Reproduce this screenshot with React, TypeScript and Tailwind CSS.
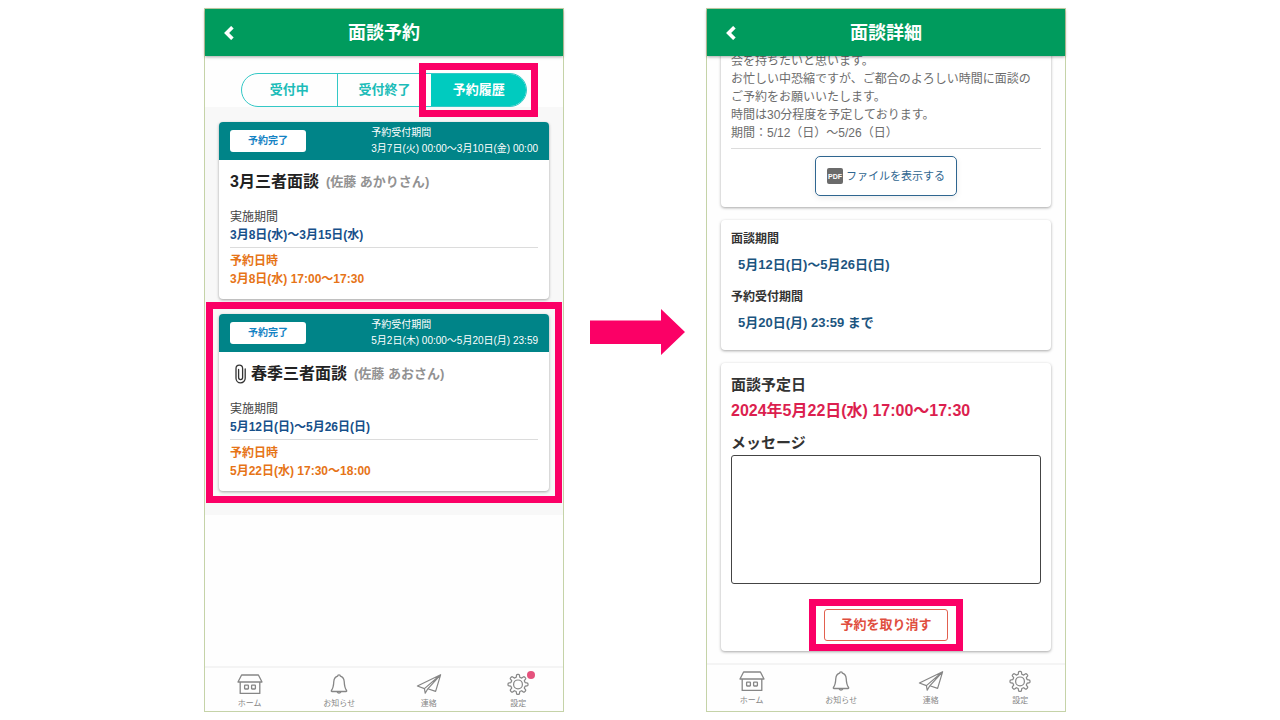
import { useState } from 'react';
import type { ReactNode } from 'react';
import clsx from 'clsx';

interface Reservation {
  id: number;
  acceptPeriod: string;
  title: string;
  student: string;
  period: string;
  reservedAt: string;
  hasFile?: boolean;
  highlighted?: boolean;
}

const reservations: Reservation[] = [
  {
    id: 1,
    acceptPeriod: '3月7日(火) 00:00～3月10日(金) 00:00',
    title: '3月三者面談',
    student: '佐藤 あかりさん',
    period: '3月8日(水)～3月15日(水)',
    reservedAt: '3月8日(水) 17:00～17:30',
  },
  {
    id: 2,
    acceptPeriod: '5月2日(木) 00:00～5月20日(月) 23:59',
    title: '春季三者面談',
    student: '佐藤 あおさん',
    period: '5月12日(日)～5月26日(日)',
    reservedAt: '5月22日(水) 17:30～18:00',
    hasFile: true,
    highlighted: true,
  },
];

const tabs = ['受付中', '受付終了', '予約履歴'];

export default function App() {
  return (
    <div className="flex min-h-screen items-stretch bg-white pt-2 pr-[214px] pb-2 pl-[204px] font-['Liberation_Sans','Noto_Sans_CJK_JP',sans-serif] text-[#333]">
      <ReservationList />
      <FlowArrow />
      <ReservationDetail />
    </div>
  );
}

function Phone({ title, className, children }: { title: string; className?: string; children: ReactNode }) {
  return (
    <section
      className={clsx('flex min-w-0 flex-1 flex-col border border-[#c5d3a8] bg-[#fefefe]', className)}
    >
      <header className="relative z-10 grid h-[47px] shrink-0 grid-cols-[48px_1fr_48px] items-center bg-[#009b5d] text-white shadow-[0_1px_3px_rgba(0,0,0,0.35)]">
        <button type="button" aria-label="戻る" className="flex h-full items-center justify-center">
          <svg width="12" height="14" viewBox="0 0 12 14" fill="none" stroke="currentColor" strokeWidth="3.6">
            <path d="M9.4 1.2 3.6 7l5.8 5.8" />
          </svg>
        </button>
        <h1 className="text-center text-lg leading-6 font-bold">{title}</h1>
      </header>
      {children}
    </section>
  );
}

function Highlight({ className }: { className: string }) {
  return <span className={clsx('pointer-events-none absolute z-20 border-[7px] border-[#fb0066]', className)} />;
}

function ReservationList() {
  const [active, setActive] = useState(2);

  return (
    <Phone title="面談予約">
      <main className="flex-1">
        <div className="px-9 pt-[17px]">
          <div className="grid h-[34px] grid-cols-3 rounded-full border border-[#34c8c6]">
            {tabs.map((tab, i) => (
              <button
                key={tab}
                type="button"
                onClick={() => setActive(i)}
                className={clsx(
                  'relative text-[13px] leading-5 font-bold',
                  i === 1 && 'border-l border-[#34c8c6]',
                  i === 2 && 'rounded-r-full',
                  i === active ? 'bg-[#00cbbf] text-white' : 'text-[#1cbcb8]',
                )}
              >
                {tab}
                {i === 2 && <Highlight className="-inset-x-3 -inset-y-[11px]" />}
              </button>
            ))}
          </div>
        </div>
        <div className="space-y-[15px] bg-[#f8f8f8] px-3.5 pt-[15px] pb-6">
          {reservations.map((item) => (
            <ReservationCard key={item.id} item={item} />
          ))}
        </div>
      </main>
      <BottomNav unread />
    </Phone>
  );
}

function ReservationCard({ item }: { item: Reservation }) {
  return (
    <article className="relative rounded bg-white shadow-[0_1px_3px_rgba(0,0,0,0.35)]">
      <div className="flex h-[38px] items-center justify-between rounded-t bg-[#008488] px-[11px] text-white">
        <span className="w-[76px] rounded-[3px] bg-white text-center text-[10px] leading-[22px] font-bold text-[#1583c4]">
          予約完了
        </span>
        <div className="text-[10px] leading-4">
          <p>予約受付期間</p>
          <p>{item.acceptPeriod}</p>
        </div>
      </div>
      <div className="px-[11px] pt-2.5 pb-[11px]">
        <div className="flex h-6 items-center">
          {item.hasFile && <ClipIcon />}
          <h2 className="text-base leading-6 font-bold text-[#222]">{item.title}</h2>
          <span className="ml-[7px] text-[13px] leading-6 font-bold text-[#929292]">({item.student})</span>
        </div>
        <dl className="mt-3.5 text-xs leading-[18px]">
          <dt className="text-[#444]">実施期間</dt>
          <dd className="font-bold text-[#17508a]">{item.period}</dd>
          <dt className="mt-[3px] border-t border-[#dcdcdc] pt-1 font-bold text-[#e67417]">予約日時</dt>
          <dd className="font-bold text-[#e67417]">{item.reservedAt}</dd>
        </dl>
      </div>
      {item.highlighted && <Highlight className="-inset-x-[13px] -inset-y-3" />}
    </article>
  );
}

function FlowArrow() {
  return (
    <div className="w-[142px] shrink-0 pt-[301px] pl-[26px]">
      <svg width="95" height="46" viewBox="0 0 95 46" fill="#fb0066" aria-hidden="true">
        <path d="M0 11.5h71V0l24 23-24 23V35H0z" />
      </svg>
    </div>
  );
}

function DetailCard({ className, children }: { className?: string; children: ReactNode }) {
  return (
    <article className={clsx('rounded bg-white px-2.5 shadow-[0_1px_3px_rgba(0,0,0,0.35)]', className)}>
      {children}
    </article>
  );
}

function ReservationDetail() {
  const [message, setMessage] = useState('');

  return (
    <Phone title="面談詳細" className="pb-[3px]">
      <main className="flex-1 space-y-[13px] px-3.5 pb-[11px]">
        <DetailCard className="-mt-1 pb-[11px]">
          <div className="border-b border-[#dcdcdc] pb-1.5 text-xs leading-[18px] text-[#6c6c6c]">
            <p>会を持ちたいと思います。</p>
            <p>お忙しい中恐縮ですが、ご都合のよろしい時間に面談のご予約をお願いいたします。</p>
            <p>時間は30分程度を予定しております。</p>
            <p>期間：5/12（日）～5/26（日）</p>
          </div>
          <button
            type="button"
            className="mx-auto mt-[7px] flex h-10 items-center gap-[3px] rounded-[5px] border border-[#2f6690] px-[11px] text-[11px] leading-4 text-[#2f6690] shadow-[0_2px_6px_rgba(0,0,0,0.08)]"
          >
            <span className="flex size-4 items-center justify-center rounded-[2px] bg-[#6b6b6b] text-[7px] leading-none font-bold text-white">
              PDF
            </span>
            ファイルを表示する
          </button>
        </DetailCard>

        <DetailCard className="pt-2.5 pb-[18px]">
          <dl className="font-bold">
            <dt className="text-xs leading-[18px]">面談期間</dt>
            <dd className="mt-2 pl-[7px] text-[13px] leading-[18px] text-[#1c557f]">5月12日(日)～5月26日(日)</dd>
            <dt className="mt-3.5 text-xs leading-[18px]">予約受付期間</dt>
            <dd className="mt-2 pl-[7px] text-[13px] leading-[18px] text-[#1c557f]">5月20日(月) 23:59 まで</dd>
          </dl>
        </DetailCard>

        <DetailCard className="pt-2.5 pb-2.5">
          <h2 className="text-[15px] leading-6 font-bold">面談予定日</h2>
          <p className="mt-0.5 text-base leading-6 font-bold text-[#dc1f4f]">2024年5月22日(水) 17:00～17:30</p>
          <label htmlFor="message" className="mt-2 block text-[15px] leading-6 font-bold">
            メッセージ
          </label>
          <textarea
            id="message"
            value={message}
            onChange={(e) => setMessage(e.target.value)}
            className="block h-[129px] w-full resize-none rounded-[3px] border border-[#444] p-2 text-xs"
          />
          <div className="mt-[25px] flex justify-center">
            <button
              type="button"
              className="relative h-8 rounded-[3px] border border-[#e2604f] px-[15px] text-[13px] leading-5 font-bold text-[#e04e3e]"
            >
              予約を取り消す
              <Highlight className="-inset-x-4 -inset-y-[11px]" />
            </button>
          </div>
        </DetailCard>
      </main>
      <BottomNav />
    </Phone>
  );
}

function BottomNav({ unread = false }: { unread?: boolean }) {
  const items = [
    { label: 'ホーム', icon: <HomeIcon /> },
    { label: 'お知らせ', icon: <BellIcon /> },
    { label: '連絡', icon: <PlaneIcon /> },
    { label: '設定', icon: <GearIcon /> },
  ];

  return (
    <nav className="grid h-[45px] shrink-0 grid-cols-4 border-t-2 border-[#f4f4f4]">
      {items.map(({ label, icon }) => (
        <a key={label} href="#" className="flex flex-col items-center pt-1 text-[8px] leading-3 text-[#868686]">
          <span className="relative">
            {icon}
            {unread && label === '設定' && (
              <span className="absolute -top-px -right-[5px] size-2 rounded-full bg-[#e5527d]" />
            )}
          </span>
          <span className="mt-0.5">{label}</span>
        </a>
      ))}
    </nav>
  );
}

function ClipIcon() {
  return (
    <svg className="mx-1" width="13" height="20" viewBox="0 0 13 20" fill="none" stroke="#333" strokeWidth="1.3">
      <path
        d="M11.2 5v9.2a4.6 4.6 0 0 1-9.2 0V4.4a3.3 3.3 0 0 1 6.6 0v9.2a2 2 0 0 1-4 0V5.4"
        strokeLinecap="round"
      />
    </svg>
  );
}

function HomeIcon() {
  return (
    <svg width="26" height="24" viewBox="0 0 26 24" fill="none" stroke="currentColor" strokeWidth="1.3">
      <path d="M4.6 3h16.8l3.6 7H1zM3.2 10v11.4h19.6V10" strokeLinejoin="round" />
      <rect x="7.6" y="13.2" width="3.8" height="3.8" rx="0.5" />
      <rect x="14.6" y="13.2" width="3.8" height="3.8" rx="0.5" />
    </svg>
  );
}

function BellIcon() {
  return (
    <svg width="24" height="24" viewBox="0 0 24 24" fill="none" stroke="currentColor" strokeWidth="1.3">
      <path
        d="M10.6 4.2a1.4 1.4 0 0 1 2.8 0c2.400.8 3.600 2.800 3.800 5.300.2 4.200.8 7 2.400 9 .3.500 0 1-.6 1H5c-.6 0-.9-.5-.6-1 1.600-2 2.200-4.800 2.400-9 .2-2.500 1.400-4.500 3.800-5.300z"
        strokeLinejoin="round"
      />
      <path d="M10.200 19.700a1.900 1.900 0 0 0 3.600 0" />
    </svg>
  );
}

function PlaneIcon() {
  return (
    <svg width="26" height="24" viewBox="0 0 26 24" fill="none" stroke="currentColor" strokeWidth="1.2">
      <path
        d="M24.600 2.800 1.400 14l7 2.600zM24.600 2.800 19.600 19.400l-7.800-2.600zM24.600 2.800 8.400 16.600l.8 4.600 2.600-4.400"
        strokeLinejoin="round"
      />
    </svg>
  );
}

function GearIcon() {
  return (
    <svg width="24" height="24" viewBox="0 0 24 24" fill="none" stroke="currentColor" strokeWidth="1.2">
      <path
        d="M10.5 3.400q0-1 1-1h1q1 0 1 1l.3 1.900 1.900.8 1.600-1.200q.7-.5 1.300.1l.8.8q.6.6.1 1.300l-1.200 1.600.8 1.900 1.900.3q1 .1 1 1v1q0 .9-1 1l-1.900.3-.8 1.900 1.200 1.600q.5.7-.1 1.300l-.8.8q-.6.6-1.300.1l-1.600-1.200-1.900.8-.3 1.900q-.1 1-1 1h-1q-.9 0-1-1l-.3-1.900-1.900-.8-1.600 1.200q-.7.5-1.300-.1l-.8-.8q-.6-.6-.1-1.300l1.200-1.600-.8-1.900-1.900-.3q-1-.1-1-1v-1q0-.9 1-1l1.900-.3.8-1.900-1.200-1.600q-.5-.7.1-1.300l.8-.8q.6-.6 1.300-.1l1.600 1.200 1.900-.8z"
        strokeLinejoin="round"
      />
      <circle cx="12" cy="12.400" r="4.400" />
    </svg>
  );
}
